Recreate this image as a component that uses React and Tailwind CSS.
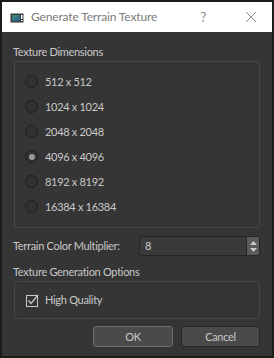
import React from "react";

const sizes = ["512 x 512", "1024 x 1024", "2048 x 2048", "4096 x 4096", "8192 x 8192", "16384 x 16384"];

const Radio = ({ checked, label }) => (
  <div className="flex items-center h-[25px]">
    <span className="w-[13px] h-[13px] rounded-full border border-[#1e1e1e] bg-[#313131] flex items-center justify-center">
      {checked && <span className="w-[6px] h-[6px] rounded-full bg-[#9a9a9a]" />}
    </span>
    <span className="ml-[7px]">{label}</span>
  </div>
);

const WindowIcon = () => (
  <svg width="14" height="10" viewBox="0 0 14 10">
    <rect x="0.5" y="0.5" width="13" height="9" fill="#3a3a3a" />
    <defs>
      <linearGradient id="g" x1="0" y1="0" x2="1" y2="1">
        <stop offset="0" stopColor="#3f8f7f" />
        <stop offset="1" stopColor="#2a5a8c" />
      </linearGradient>
    </defs>
    <rect x="2" y="2" width="8" height="6" fill="url(#g)" />
    <rect x="11" y="2" width="1.5" height="4" fill="#ffffff" />
    <rect x="11" y="7" width="1.5" height="1" fill="#ffffff" />
  </svg>
);

export default function App() {
  return (
    <div className="w-[274px] h-[358px] border-2 border-[#1b1b1b] bg-[#353535] flex flex-col font-['Lato',sans-serif] text-[11px] tracking-[-0.3px] text-[#c8c8c8] leading-[14px]">
      {/* title bar */}
      <div className="h-[30px] bg-white flex items-center shrink-0">
        <div className="ml-[8px] mt-[1px]">
          <WindowIcon />
        </div>
        <span className="ml-[7px] text-[12px] tracking-[-0.15px] text-[#7a7a7a]">Generate Terrain Texture</span>
        <span className="ml-auto text-[13px] text-[#8a8a8a] mr-[39px]">?</span>
        <svg width="12" height="12" viewBox="0 0 12 12" className="mr-[15px]">
          <path d="M1 1L11 11M11 1L1 11" stroke="#8a8a8a" strokeWidth="1" />
        </svg>
      </div>

      <div className="flex flex-col px-[12px]">
        <div className="mt-[13px] -ml-px">Texture Dimensions</div>
        <div className="mt-[2px] border border-[#474747] rounded-[3px] pl-[10px] pt-[7px] pb-[8px]">
          {sizes.map((s, i) => (
            <Radio key={s} label={s} checked={i === 3} />
          ))}
        </div>

        <div className="mt-[8px] flex items-center h-[20px]">
          <span className="-ml-px">Terrain Color Multiplier:</span>
          <div className="ml-auto w-[121px] h-[20px] border border-[#262626] rounded-[3px] bg-[#3a3a3a] flex">
            <span className="pl-[5px] flex items-center text-[#d0d0d0]">8</span>
            <div className="ml-auto w-[13px] bg-[#5a5a5a] rounded-r-[2px] border-l border-[#262626] flex flex-col items-center justify-center gap-[3px]">
              <svg width="7" height="4" viewBox="0 0 7 4">
                <path d="M0 4L3.5 0L7 4Z" fill="#c8c8c8" />
              </svg>
              <svg width="7" height="4" viewBox="0 0 7 4">
                <path d="M0 0L3.5 4L7 0Z" fill="#c8c8c8" />
              </svg>
            </div>
          </div>
        </div>

        <div className="mt-[9px] -ml-px">Texture Generation Options</div>
        <div className="mt-[2px] border border-[#474747] rounded-[3px] h-[38px] flex items-center pl-[11px]">
          <svg width="13" height="13" viewBox="0 0 13 13">
            <rect x="0.5" y="1.5" width="11" height="11" fill="none" stroke="#c8c8c8" strokeWidth="1" />
            <path d="M2.5 6.5L5 9.5L12 1" fill="none" stroke="#c8c8c8" strokeWidth="1.3" />
          </svg>
          <span className="ml-[6px]">High Quality</span>
        </div>

        <div className="mt-[7px] flex justify-end gap-[8px]">
          <button className="w-[80px] h-[21px] rounded-[3px] border border-[#6e6e6e] bg-[#4a4a4a] text-[#c8c8c8]">OK</button>
          <button className="w-[79px] h-[21px] rounded-[3px] border border-[#262626] bg-[#4a4a4a] text-[#c8c8c8]">Cancel</button>
        </div>
      </div>
    </div>
  );
}
